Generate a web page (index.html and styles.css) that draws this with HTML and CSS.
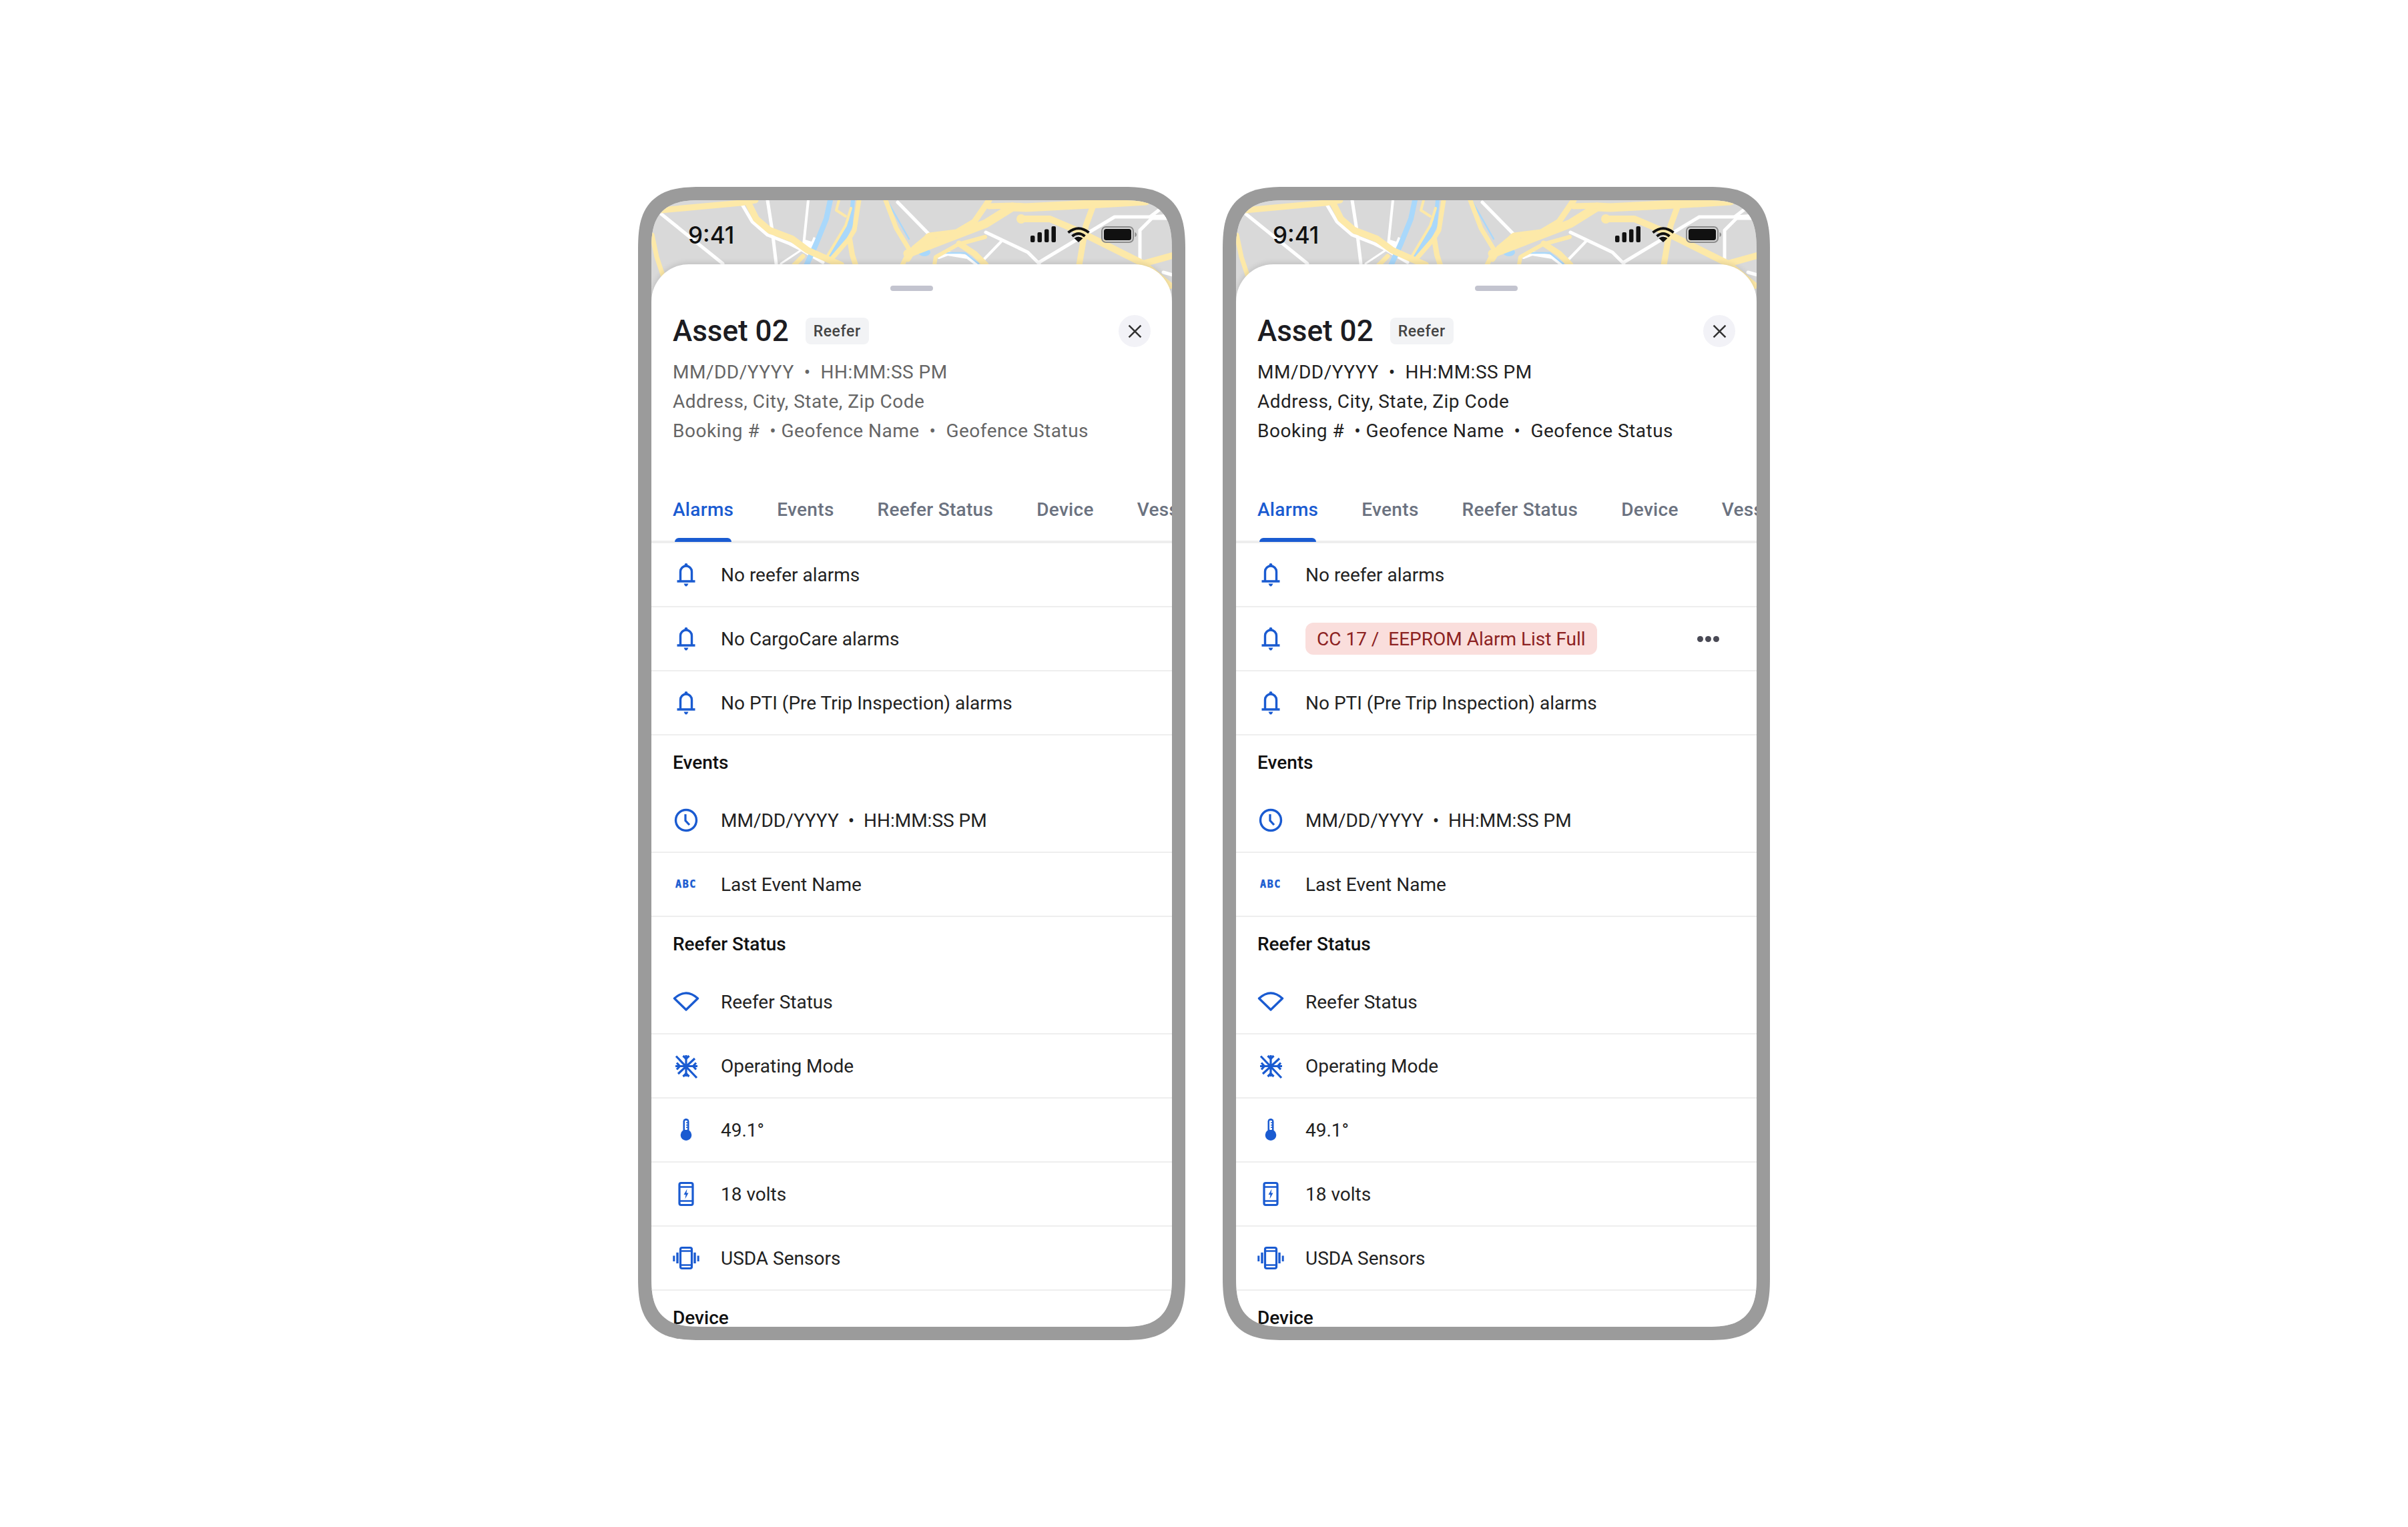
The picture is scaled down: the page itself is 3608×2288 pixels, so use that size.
FILE: index.html
```html
<!DOCTYPE html>
<html>
  <head>
    <title>Asset details</title>
    <meta charset="UTF-8">
    <link rel="stylesheet" href="styles.css">
  </head>
  <body>
    <svg class="sprites" width="0" height="0">
      <symbol id="map" viewBox="0 0 780 180">
        <rect width="780" height="180" fill="#d9d9d9"/>
        <g fill="none" stroke="#fff" stroke-width="5" stroke-linecap="round" stroke-linejoin="round">
          <path d="M14 20L107 95"/>
          <path d="M119 4L134 3L151 32L174 52L207 65L227 75L257 93"/>
          <path d="M174 0L181 45L187 95"/>
          <path stroke-width="4" d="M235 0L229 58"/>
          <path stroke-width="3" d="M194 95L224 75"/>
          <path d="M369 3L417 52"/>
          <path d="M501 48L564 78L581 95"/>
          <path stroke-width="4" d="M524 62L497 90"/>
          <path d="M581 93L694 25L747 25L764 12"/>
          <path d="M747 25L780 23"/>
          <path d="M776 27L750 27L732 45L732 90"/>
          <path d="M767 108L781 112"/>
          <path stroke-width="6" d="M431 85L444 80L474 85L487 95"/>
        </g>
        <path fill="#fff" d="M227 58L240 62L243 55L247 57L246 72L238 76L226 66Z"/>
        <g fill="none" stroke="#a9d8fb" stroke-linecap="round" stroke-linejoin="round">
          <path stroke-width="8" d="M268 0L262 28L247 65L232 98"/>
          <path stroke-width="6" d="M302 0L299 32"/>
          <path stroke-width="10" d="M298 35L287 58L271 85"/>
          <path stroke-width="2.5" d="M354 2L386 58"/>
          <path stroke-width="2.5" d="M436 79L470 79L490 95"/>
        </g>
        <ellipse cx="409" cy="78" rx="9" ry="6" fill="#a9d8fb"/>
        <g fill="none" stroke="#fde9a8" stroke-linejoin="round" stroke-linecap="round">
          <path stroke-width="9" d="M14 15L134 4L156 0"/>
          <path stroke-width="10" d="M144 2L157 28L177 45L211 58L234 75L261 87L284 97"/>
          <path stroke-width="7" d="M1 52L8 85L18 115"/>
          <path stroke-width="7" d="M214 97L227 84"/>
          <path stroke-width="7" d="M311 0L304 45L296 58L270 88"/>
          <path stroke-width="4" d="M299 12L291 38L264 83"/>
          <path stroke-width="4" d="M281 0L277 15L291 24"/>
          <path stroke-width="8" d="M297 58L301 82L306 97"/>
          <path stroke-width="7" d="M351 0L367 42L387 75L376 97"/>
          <path stroke-width="9" d="M506 0L484 32L457 48L417 53L394 72L384 88"/>
          <path stroke-width="13" d="M384 80L441 58L501 35L541 10L561 11L657 6L741 1"/>
          <path stroke-width="9" d="M506 9L541 8"/>
          <path stroke-width="10" d="M554 28L597 28L637 45L737 95"/>
          <path stroke-width="9" d="M461 65L484 80L501 97"/>
          <path stroke-width="9" d="M662 8L651 38L641 97"/>
          <path stroke-width="10" d="M737 95L784 82"/>
          <path stroke-width="10" d="M737 95L777 128"/>
          <path stroke-width="6" d="M424 97L426 85L460 66L500 55"/>
        </g>
        <circle cx="554" cy="28" r="7" fill="#fde9a8"/>
        <circle cx="417" cy="58" r="9" fill="#fde9a8"/>
      </symbol>
      <symbol id="bell" viewBox="0 0 40 40">
        <path fill="none" stroke="currentColor" stroke-width="3.400" d="M11.500 30V15.500a8.500 8.500 0 0 1 17 0V30M6.500 30H33.500"/>
        <circle cx="20" cy="5.500" r="2.400" fill="currentColor"/>
        <path fill="currentColor" d="M16.500 33.500h7l-1.500 2.800a2.200 2.200 0 0 1-4 0z"/>
      </symbol>
      <symbol id="clock" viewBox="0 0 40 40">
        <circle cx="20" cy="20" r="15.500" fill="none" stroke="currentColor" stroke-width="3.400"/>
        <path fill="none" stroke="currentColor" stroke-width="3.200" d="M19 11V20.500L25 27"/>
      </symbol>
      <symbol id="signal" viewBox="0 0 40 40">
        <path fill="none" stroke="currentColor" stroke-width="3.400" stroke-linejoin="round" d="M2.500 15Q20-1 37.500 15L20 32Z"/>
      </symbol>
      <symbol id="snow" viewBox="0 0 40 40">
        <g fill="none" stroke="currentColor" stroke-width="3.200">
          <path d="M20 4V36M4 20.500H37M5 5.500L36 38M8 32L33 9"/>
          <path d="M15.500 5L20 9.500L24.500 5M15.500 36L20 31.500L24.500 36M6 15.500L10.500 20.500L6 25.500M35 15.500L30.500 20.500L35 25.500"/>
        </g>
      </symbol>
      <symbol id="temp" viewBox="0 0 40 40">
        <circle cx="20" cy="27.700" r="8.300" fill="currentColor"/>
        <rect x="15.500" y="3" width="9" height="22" rx="4.500" fill="currentColor"/>
        <rect x="18" y="6" width="4" height="14" rx="1" fill="#fff"/>
        <path fill="currentColor" d="M20 8.500h2v1.500h-2zM20 12h2v1.500h-2zM20 15.500h2v1.500h-2z"/>
      </symbol>
      <symbol id="volts" viewBox="0 0 40 40">
        <rect x="10" y="3.500" width="20" height="33" rx="2.500" fill="none" stroke="currentColor" stroke-width="3.200"/>
        <path stroke="currentColor" stroke-width="2.500" d="M10 9.500H30M10 30.500H30"/>
        <path fill="currentColor" d="M21.500 12.500L16.500 21H19.500L18.500 27.500L23.500 18.500H20.500Z"/>
      </symbol>
      <symbol id="sensor" viewBox="0 0 40 40">
        <rect x="11.500" y="4.500" width="17" height="31" rx="2.500" fill="none" stroke="currentColor" stroke-width="3.200"/>
        <path stroke="currentColor" stroke-width="2.500" d="M11.500 9.500H28.500M11.500 30.500H28.500"/>
        <path fill="currentColor" d="M5.300 11.700h3.400V28H5.300zM.3 16.500h3V25h-3zM31.300 11.700h3.400V28h-3.400zM36.700 16.500h3V25h-3z"/>
      </symbol>
      <symbol id="x" viewBox="0 0 20 20">
        <path fill="none" stroke="currentColor" stroke-width="2.400" d="M1.500 1.500L18.500 18.500M18.500 1.500L1.500 18.500"/>
      </symbol>
      <symbol id="bars" viewBox="0 0 38 24">
        <rect x="0" y="14" width="6.500" height="10" rx="2"/>
        <rect x="10.500" y="9" width="6.500" height="15" rx="2"/>
        <rect x="21" y="4.500" width="6.500" height="19.500" rx="2"/>
        <rect x="31.500" y="0" width="6.500" height="24" rx="2"/>
      </symbol>
      <symbol id="wifi" viewBox="0 0 34 24">
        <path fill="none" stroke="currentColor" stroke-width="4" d="M1.500 9.500Q17-3 32.500 9.500M7.500 15Q17 7 26.500 15"/>
        <path fill="currentColor" d="M17 24L10.500 18Q17 13.500 23.500 18Z"/>
      </symbol>
      <symbol id="batt" viewBox="0 0 53 25">
        <rect x="1" y="1" width="47" height="23" rx="6" fill="none" stroke="#8b8b8b" stroke-width="2"/>
        <rect x="4" y="4" width="41" height="17" rx="3.500" fill="#111"/>
        <path fill="#8b8b8b" d="M50.500 9c1.500.5 2.500 2 2.500 3.500s-1 3-2.500 3.500z"/>
      </symbol>
    </svg>

    <div class="phones">
      <!-- no active alarm -->
      <div class="phone">
        <div class="screen">
          <svg class="map"><use href="#map"/></svg>
          <div class="status">
            <span class="time">9:41</span>
            <div class="status-icons">
              <svg class="s-bars"><use href="#bars"/></svg>
              <svg class="s-wifi"><use href="#wifi"/></svg>
              <svg class="s-batt"><use href="#batt"/></svg>
            </div>
          </div>
          <div class="sheet">
            <div class="handle"></div>
            <div class="head">
              <h1>Asset 02</h1>
              <span class="badge">Reefer</span>
              <button class="close"><svg><use href="#x"/></svg></button>
            </div>
            <div class="meta">
              <div>MM/DD/YYYY &nbsp;•&nbsp; HH:MM:SS PM</div>
              <div>Address, City, State, Zip Code</div>
              <div>Booking # &nbsp;• Geofence Name &nbsp;•&nbsp; Geofence Status</div>
            </div>
            <div class="tabs">
              <span class="tab on">Alarms</span>
              <span class="tab">Events</span>
              <span class="tab">Reefer Status</span>
              <span class="tab">Device</span>
              <span class="tab">Vessel</span>
            </div>
            <div class="row"><svg class="ico"><use href="#bell"/></svg><span>No reefer alarms</span></div>
            <div class="row"><svg class="ico"><use href="#bell"/></svg><span>No CargoCare alarms</span></div>
            <div class="row"><svg class="ico"><use href="#bell"/></svg><span>No PTI (Pre Trip Inspection) alarms</span></div>
            <h2>Events</h2>
            <div class="row"><svg class="ico"><use href="#clock"/></svg><span>MM/DD/YYYY &nbsp;•&nbsp; HH:MM:SS PM</span></div>
            <div class="row"><span class="ico abc">ABC</span><span>Last Event Name</span></div>
            <h2>Reefer Status</h2>
            <div class="row"><svg class="ico"><use href="#signal"/></svg><span>Reefer Status</span></div>
            <div class="row"><svg class="ico"><use href="#snow"/></svg><span>Operating Mode</span></div>
            <div class="row"><svg class="ico"><use href="#temp"/></svg><span>49.1°</span></div>
            <div class="row"><svg class="ico"><use href="#volts"/></svg><span>18 volts</span></div>
            <div class="row"><svg class="ico"><use href="#sensor"/></svg><span>USDA Sensors</span></div>
            <h2>Device</h2>
          </div>
        </div>
      </div>

      <!-- CC 17 alarm -->
      <div class="phone">
        <div class="screen">
          <svg class="map"><use href="#map"/></svg>
          <div class="status">
            <span class="time">9:41</span>
            <div class="status-icons">
              <svg class="s-bars"><use href="#bars"/></svg>
              <svg class="s-wifi"><use href="#wifi"/></svg>
              <svg class="s-batt"><use href="#batt"/></svg>
            </div>
          </div>
          <div class="sheet">
            <div class="handle"></div>
            <div class="head">
              <h1>Asset 02</h1>
              <span class="badge">Reefer</span>
              <button class="close"><svg><use href="#x"/></svg></button>
            </div>
            <div class="meta dark">
              <div>MM/DD/YYYY &nbsp;•&nbsp; HH:MM:SS PM</div>
              <div>Address, City, State, Zip Code</div>
              <div>Booking # &nbsp;• Geofence Name &nbsp;•&nbsp; Geofence Status</div>
            </div>
            <div class="tabs">
              <span class="tab on">Alarms</span>
              <span class="tab">Events</span>
              <span class="tab">Reefer Status</span>
              <span class="tab">Device</span>
              <span class="tab">Vessel</span>
            </div>
            <div class="row"><svg class="ico"><use href="#bell"/></svg><span>No reefer alarms</span></div>
            <div class="row">
              <svg class="ico"><use href="#bell"/></svg>
              <span class="chip">CC 17 / &nbsp;EEPROM Alarm List Full</span>
              <span class="more"><i></i><i></i><i></i></span>
            </div>
            <div class="row"><svg class="ico"><use href="#bell"/></svg><span>No PTI (Pre Trip Inspection) alarms</span></div>
            <h2>Events</h2>
            <div class="row"><svg class="ico"><use href="#clock"/></svg><span>MM/DD/YYYY &nbsp;•&nbsp; HH:MM:SS PM</span></div>
            <div class="row"><span class="ico abc">ABC</span><span>Last Event Name</span></div>
            <h2>Reefer Status</h2>
            <div class="row"><svg class="ico"><use href="#signal"/></svg><span>Reefer Status</span></div>
            <div class="row"><svg class="ico"><use href="#snow"/></svg><span>Operating Mode</span></div>
            <div class="row"><svg class="ico"><use href="#temp"/></svg><span>49.1°</span></div>
            <div class="row"><svg class="ico"><use href="#volts"/></svg><span>18 volts</span></div>
            <div class="row"><svg class="ico"><use href="#sensor"/></svg><span>USDA Sensors</span></div>
            <h2>Device</h2>
          </div>
        </div>
      </div>
    </div>
  </body>
</html>
```
FILE: styles.css
```css
html, body {
  height: 100%;
}
body {
  margin: 0;
  background: #fff;
  font-family: Roboto, sans-serif;
  color: #222;
  font-size: 28px;
}
.sprites {
  position: absolute;
}
.phones {
  display: flex;
  justify-content: center;
  align-items: center;
  gap: 56px;
  height: 100%;
}
.phone {
  box-sizing: border-box;
  width: 820px;
  height: 1728px;
  border: 20px solid #9b9b9b;
  border-radius: 96px;
  corner-shape: superellipse(1.5);
  background: #9b9b9b;
}
.screen {
  position: relative;
  display: flex;
  flex-direction: column;
  height: 100%;
  border-radius: 76px;
  corner-shape: superellipse(1.5);
  overflow: hidden;
  background: #d9d9d9;
}
.map {
  position: absolute;
  top: 0;
  left: 0;
  width: 780px;
  height: 180px;
}

/* status bar */
.status {
  position: relative;
  flex: none;
  display: flex;
  justify-content: space-between;
  height: 96px;
  padding: 39px 53px 0 55px;
  box-sizing: border-box;
}
.time {
  font-family: Inter, sans-serif;
  font-size: 35px;
  font-weight: 500;
  line-height: 26px;
  color: #111;
}
.status-icons {
  display: flex;
  gap: 17px;
  height: 25px;
}
.status-icons svg {
  display: block;
  color: #111;
  fill: #111;
}
.s-bars { width: 38px; height: 24px; }
.s-wifi { width: 34px; height: 24px; }
.s-batt { width: 53px; height: 25px; }

/* sheet */
.sheet {
  position: relative;
  flex: 1;
  min-height: 0;
  background: #fff;
  border-radius: 56px 56px 0 0;
  box-shadow: 0 -2px 8px rgba(0,0,0,0.12);
}
.handle {
  width: 64px;
  height: 8px;
  margin: 32px auto 0;
  border-radius: 4px;
  background: #c3c4cf;
}
.head {
  display: flex;
  align-items: center;
  height: 48px;
  margin-top: 36px;
  padding: 0 32px;
}
h1 {
  margin: 0 25px 0 0;
  font-size: 44px;
  font-weight: 500;
  color: #1c1c22;
}
.badge {
  display: flex;
  align-items: center;
  justify-content: center;
  width: 95px;
  height: 40px;
  border-radius: 8px;
  background: #f2f3f5;
  font-size: 23px;
  font-weight: 500;
  letter-spacing: 0.6px;
  color: #444;
}
.close {
  display: flex;
  align-items: center;
  justify-content: center;
  width: 48px;
  height: 48px;
  margin-left: auto;
  padding: 0;
  border: 0;
  border-radius: 50%;
  background: #f2f2f7;
  color: #333;
}
.close svg {
  width: 21px;
  height: 21px;
}
.meta {
  margin-top: 16px;
  padding: 0 32px;
  line-height: 44px;
  letter-spacing: 0.5px;
  color: #666;
}
.meta.dark {
  color: #222;
}

/* tabs */
.tabs {
  display: flex;
  align-items: flex-start;
  gap: 65px;
  box-sizing: border-box;
  height: 96px;
  margin-top: 50px;
  padding: 0 32px;
  box-shadow: inset 0 -4px 0 #eee;
  overflow: hidden;
  white-space: nowrap;
  font-size: 28px;
  font-weight: 500;
  letter-spacing: 0.3px;
  color: #6b7280;
}
.tab {
  position: relative;
  flex: none;
  height: 92px;
  line-height: 92px;
}
.tab.on {
  color: #1a5bd1;
}
.tab.on::after {
  content: "";
  position: absolute;
  left: 3px;
  right: 3px;
  bottom: -2px;
  height: 6px;
  border-radius: 6px 6px 0 0;
  background: #1a5bd1;
}

/* rows */
.row {
  display: flex;
  align-items: center;
  gap: 32px;
  box-sizing: border-box;
  height: 96px;
  padding: 0 32px;
  border-bottom: 2px solid #eee;
}
.ico {
  flex: none;
  width: 40px;
  height: 40px;
  color: #1a5bd1;
}
.abc {
  display: flex;
  align-items: center;
  justify-content: center;
  font-family: "DejaVu Sans Mono", monospace;
  font-size: 15px;
  font-weight: 700;
  letter-spacing: 1.6px;
  -webkit-text-stroke: 0.5px #1a5bd1;
}
h2 {
  display: flex;
  align-items: center;
  height: 80px;
  margin: 0;
  padding: 0 32px;
  font-size: 28px;
  font-weight: 500;
  color: #111;
}
.chip {
  display: flex;
  align-items: center;
  height: 48px;
  padding: 0 17px;
  border-radius: 12px;
  background: #fadedc;
  color: #8c2222;
}
.more {
  display: flex;
  gap: 3px;
  margin-left: auto;
  margin-right: 24px;
}
.more i {
  display: block;
  width: 9px;
  height: 9px;
  border-radius: 50%;
  background: #4a4a55;
}
```
